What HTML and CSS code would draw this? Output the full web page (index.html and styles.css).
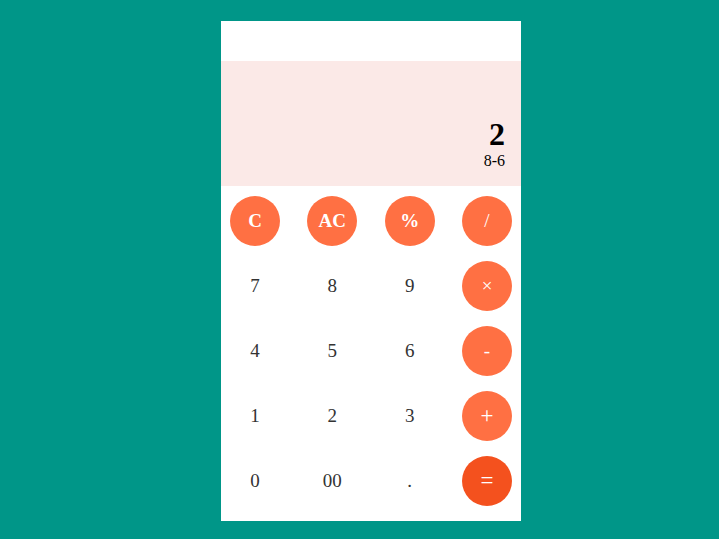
FILE: index.html
```html
<!DOCTYPE html>
<html>
<head>
<meta charset="utf-8">
<link rel="stylesheet" href="styles.css">
</head>
<body>
<div class="calc">
  <div class="topbar"></div>
  <div class="display">
    <div class="result">2</div>
    <div class="expr">8-6</div>
  </div>
  <div class="keys">
    <button class="key op strong">C</button>
    <button class="key op strong">AC</button>
    <button class="key op strong">%</button>
    <button class="key op">/</button>
    <button class="key">7</button>
    <button class="key">8</button>
    <button class="key">9</button>
    <button class="key op">×</button>
    <button class="key">4</button>
    <button class="key">5</button>
    <button class="key">6</button>
    <button class="key op">-</button>
    <button class="key">1</button>
    <button class="key">2</button>
    <button class="key">3</button>
    <button class="key op big">+</button>
    <button class="key">0</button>
    <button class="key">00</button>
    <button class="key">.</button>
    <button class="key op eq big">=</button>
  </div>
</div>
</body>
</html>
```
FILE: styles.css
```css
html, body {
  margin: 0;
  height: 100%;
}
body {
  background: #009688;
  padding: 21px 0 0 221px;
  box-sizing: border-box;
  font-family: "Liberation Serif", "Times New Roman", serif;
}
.calc {
  width: 300px;
  height: 500px;
  background: #ffffff;
  display: flex;
  flex-direction: column;
}
.topbar {
  height: 40px;
}
.display {
  height: 125px;
  background: #fbe9e7;
  display: flex;
  flex-direction: column;
  justify-content: flex-end;
  align-items: flex-end;
  padding: 0 16px 17px 16px;
  box-sizing: border-box;
  color: #000;
  font-family: "Liberation Serif", "Times New Roman", serif;
}
.result {
  font-size: 32px;
  font-weight: bold;
  line-height: 1;
}
.expr {
  font-size: 16px;
  line-height: 1;
  margin-top: 3px;
}
.keys {
  display: grid;
  grid-template-columns: repeat(4, 50px);
  grid-auto-rows: 50px;
  justify-content: space-between;
  row-gap: 15px;
  padding: 10px 9px 15px 9px;
}
.key {
  width: 50px;
  height: 50px;
  border: none;
  border-radius: 50%;
  background: transparent;
  font-family: "Liberation Serif", "Times New Roman", serif;
  font-size: 19px;
  color: #333333;
  padding: 0;
  display: flex;
  align-items: center;
  justify-content: center;
}
.op {
  background: #ff7043;
  color: #ffffff;
}
.strong {
  font-weight: bold;
}
.big {
  font-size: 23px;
}
.eq {
  background: #f4511e;
}
```
